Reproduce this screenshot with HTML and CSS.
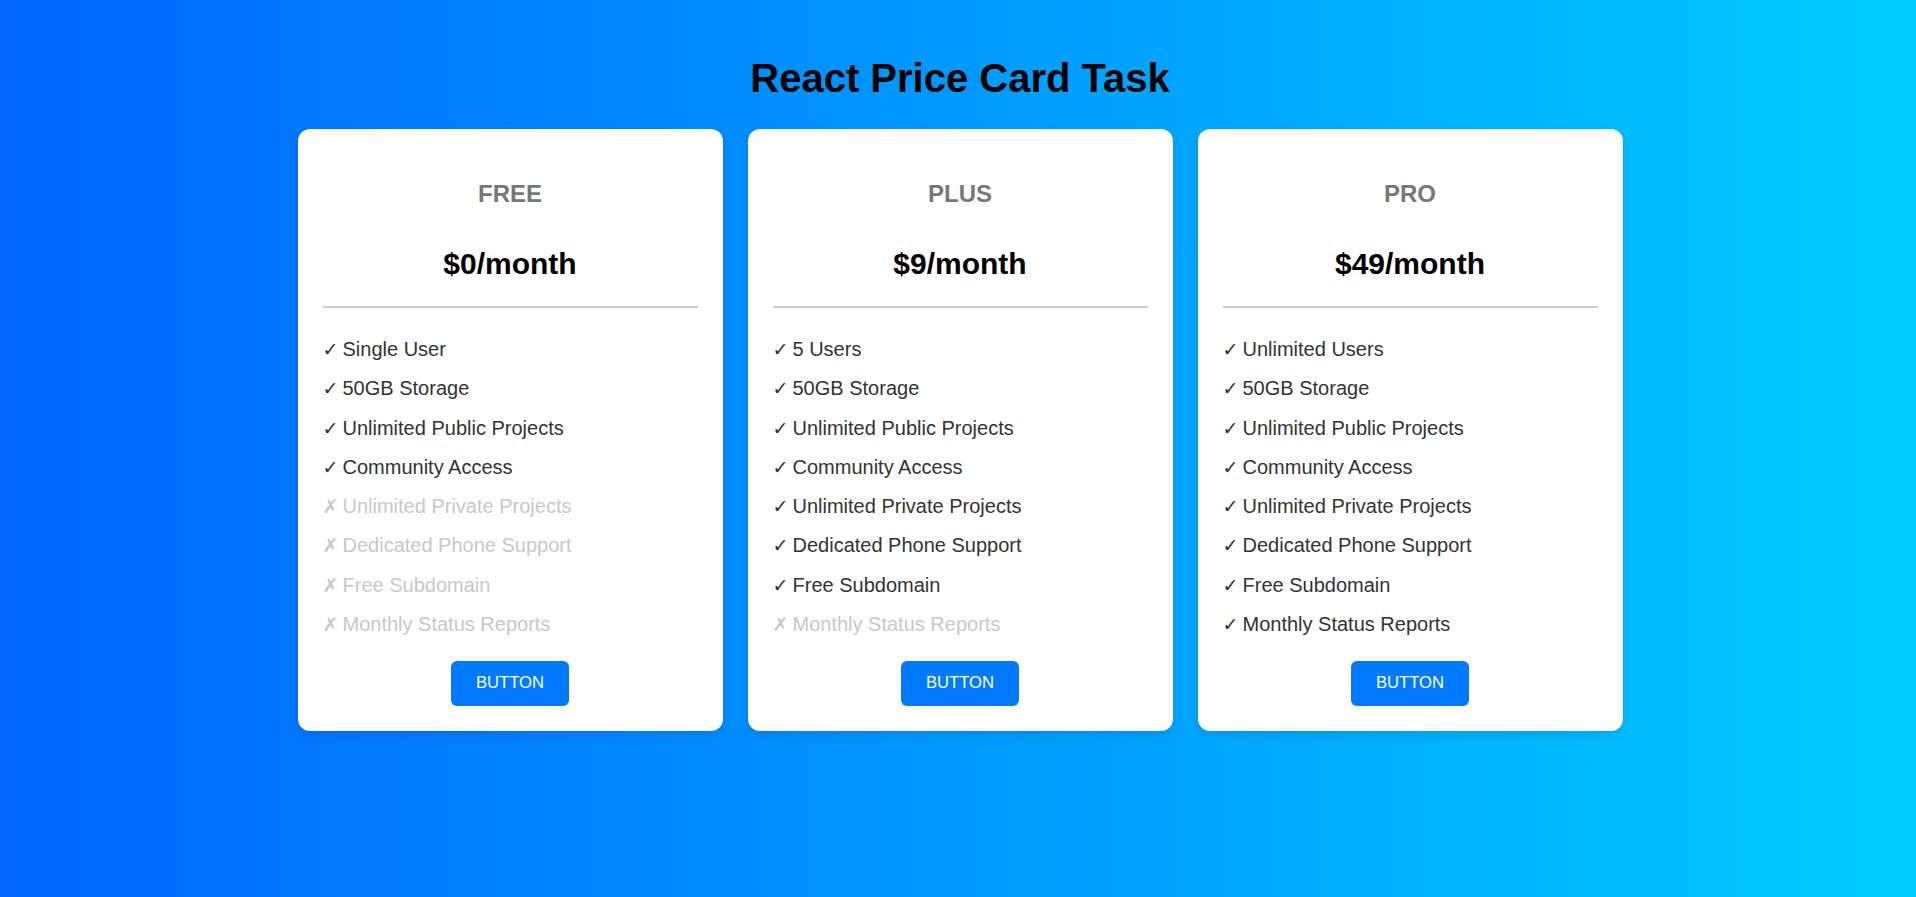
FILE: index.html
```html
<!DOCTYPE html>
<html lang="en">
<head>
<meta charset="utf-8">
<title>React Price Card Task</title>
<link rel="stylesheet" href="styles.css">
</head>
<body>
<div class="page">
  <h1 class="title">React Price Card Task</h1>
  <div class="cards">
    <div class="card">
      <h3 class="plan">FREE</h3>
      <h2 class="price">$0/month</h2>
      <hr class="divider">
      <ul class="features">
        <li class="on"><span class="mark">✓</span>Single User</li>
        <li class="on"><span class="mark">✓</span>50GB Storage</li>
        <li class="on"><span class="mark">✓</span>Unlimited Public Projects</li>
        <li class="on"><span class="mark">✓</span>Community Access</li>
        <li class="off"><span class="mark">✗</span>Unlimited Private Projects</li>
        <li class="off"><span class="mark">✗</span>Dedicated Phone Support</li>
        <li class="off"><span class="mark">✗</span>Free Subdomain</li>
        <li class="off"><span class="mark">✗</span>Monthly Status Reports</li>
      </ul>
      <div class="actions"><button class="btn">BUTTON</button></div>
    </div>
    <div class="card">
      <h3 class="plan">PLUS</h3>
      <h2 class="price">$9/month</h2>
      <hr class="divider">
      <ul class="features">
        <li class="on"><span class="mark">✓</span>5 Users</li>
        <li class="on"><span class="mark">✓</span>50GB Storage</li>
        <li class="on"><span class="mark">✓</span>Unlimited Public Projects</li>
        <li class="on"><span class="mark">✓</span>Community Access</li>
        <li class="on"><span class="mark">✓</span>Unlimited Private Projects</li>
        <li class="on"><span class="mark">✓</span>Dedicated Phone Support</li>
        <li class="on"><span class="mark">✓</span>Free Subdomain</li>
        <li class="off"><span class="mark">✗</span>Monthly Status Reports</li>
      </ul>
      <div class="actions"><button class="btn">BUTTON</button></div>
    </div>
    <div class="card">
      <h3 class="plan">PRO</h3>
      <h2 class="price">$49/month</h2>
      <hr class="divider">
      <ul class="features">
        <li class="on"><span class="mark">✓</span>Unlimited Users</li>
        <li class="on"><span class="mark">✓</span>50GB Storage</li>
        <li class="on"><span class="mark">✓</span>Unlimited Public Projects</li>
        <li class="on"><span class="mark">✓</span>Community Access</li>
        <li class="on"><span class="mark">✓</span>Unlimited Private Projects</li>
        <li class="on"><span class="mark">✓</span>Dedicated Phone Support</li>
        <li class="on"><span class="mark">✓</span>Free Subdomain</li>
        <li class="on"><span class="mark">✓</span>Monthly Status Reports</li>
      </ul>
      <div class="actions"><button class="btn">BUTTON</button></div>
    </div>
  </div>
</div>
</body>
</html>
```
FILE: styles.css
```css
html, body {
  margin: 0;
  padding: 0;
  height: 100%;
}

body {
  font-family: "Liberation Sans", Arial, sans-serif;
  background: linear-gradient(to right, #0066ff, #00ccff);
  min-height: 897px;
}

.page {
  display: flex;
  flex-direction: column;
  align-items: center;
  padding: 55px 0 0 4px;
}

.title {
  margin: 0 0 28px;
  font-size: 40px;
  line-height: 46px;
  font-weight: bold;
  color: #000;
}

.cards {
  display: flex;
  gap: 25px;
}

.card {
  width: 425px;
  box-sizing: border-box;
  padding: 25px;
  background: #fff;
  border-radius: 12px;
  box-shadow: 0 4px 10px rgba(0, 0, 0, 0.12);
  display: flex;
  flex-direction: column;
}

.plan {
  margin: 26px 0 0;
  font-size: 24px;
  line-height: 28px;
  font-weight: bold;
  color: #777;
  text-align: center;
}

.price {
  margin: 39px 0 0;
  font-size: 30px;
  line-height: 34px;
  font-weight: bold;
  color: #000;
  text-align: center;
}

.divider {
  margin: 24.5px 0 0;
  border: 0;
  height: 2px;
  background: #ccc;
}

.features {
  list-style: none;
  margin: 22.5px 0 0;
  padding: 0;
}

.features li {
  font-size: 20px;
  line-height: 39.27px;
  height: 39.27px;
  white-space: nowrap;
}

.features li.on {
  color: #333;
}

.features li.off {
  color: #c8c8c8;
}

.mark {
  display: inline-block;
  width: 20px;
  font-family: "DejaVu Sans", sans-serif;
  font-size: 19px;
}

.actions {
  display: flex;
  justify-content: center;
  margin-top: 16.5px;
}

.btn {
  font-family: "Liberation Sans", Arial, sans-serif;
  font-size: 16.67px;
  line-height: 20px;
  height: 45px;
  padding: 0 25px;
  border: 0;
  border-radius: 6px;
  background: #007bff;
  color: #fff;
  cursor: pointer;
}
```
